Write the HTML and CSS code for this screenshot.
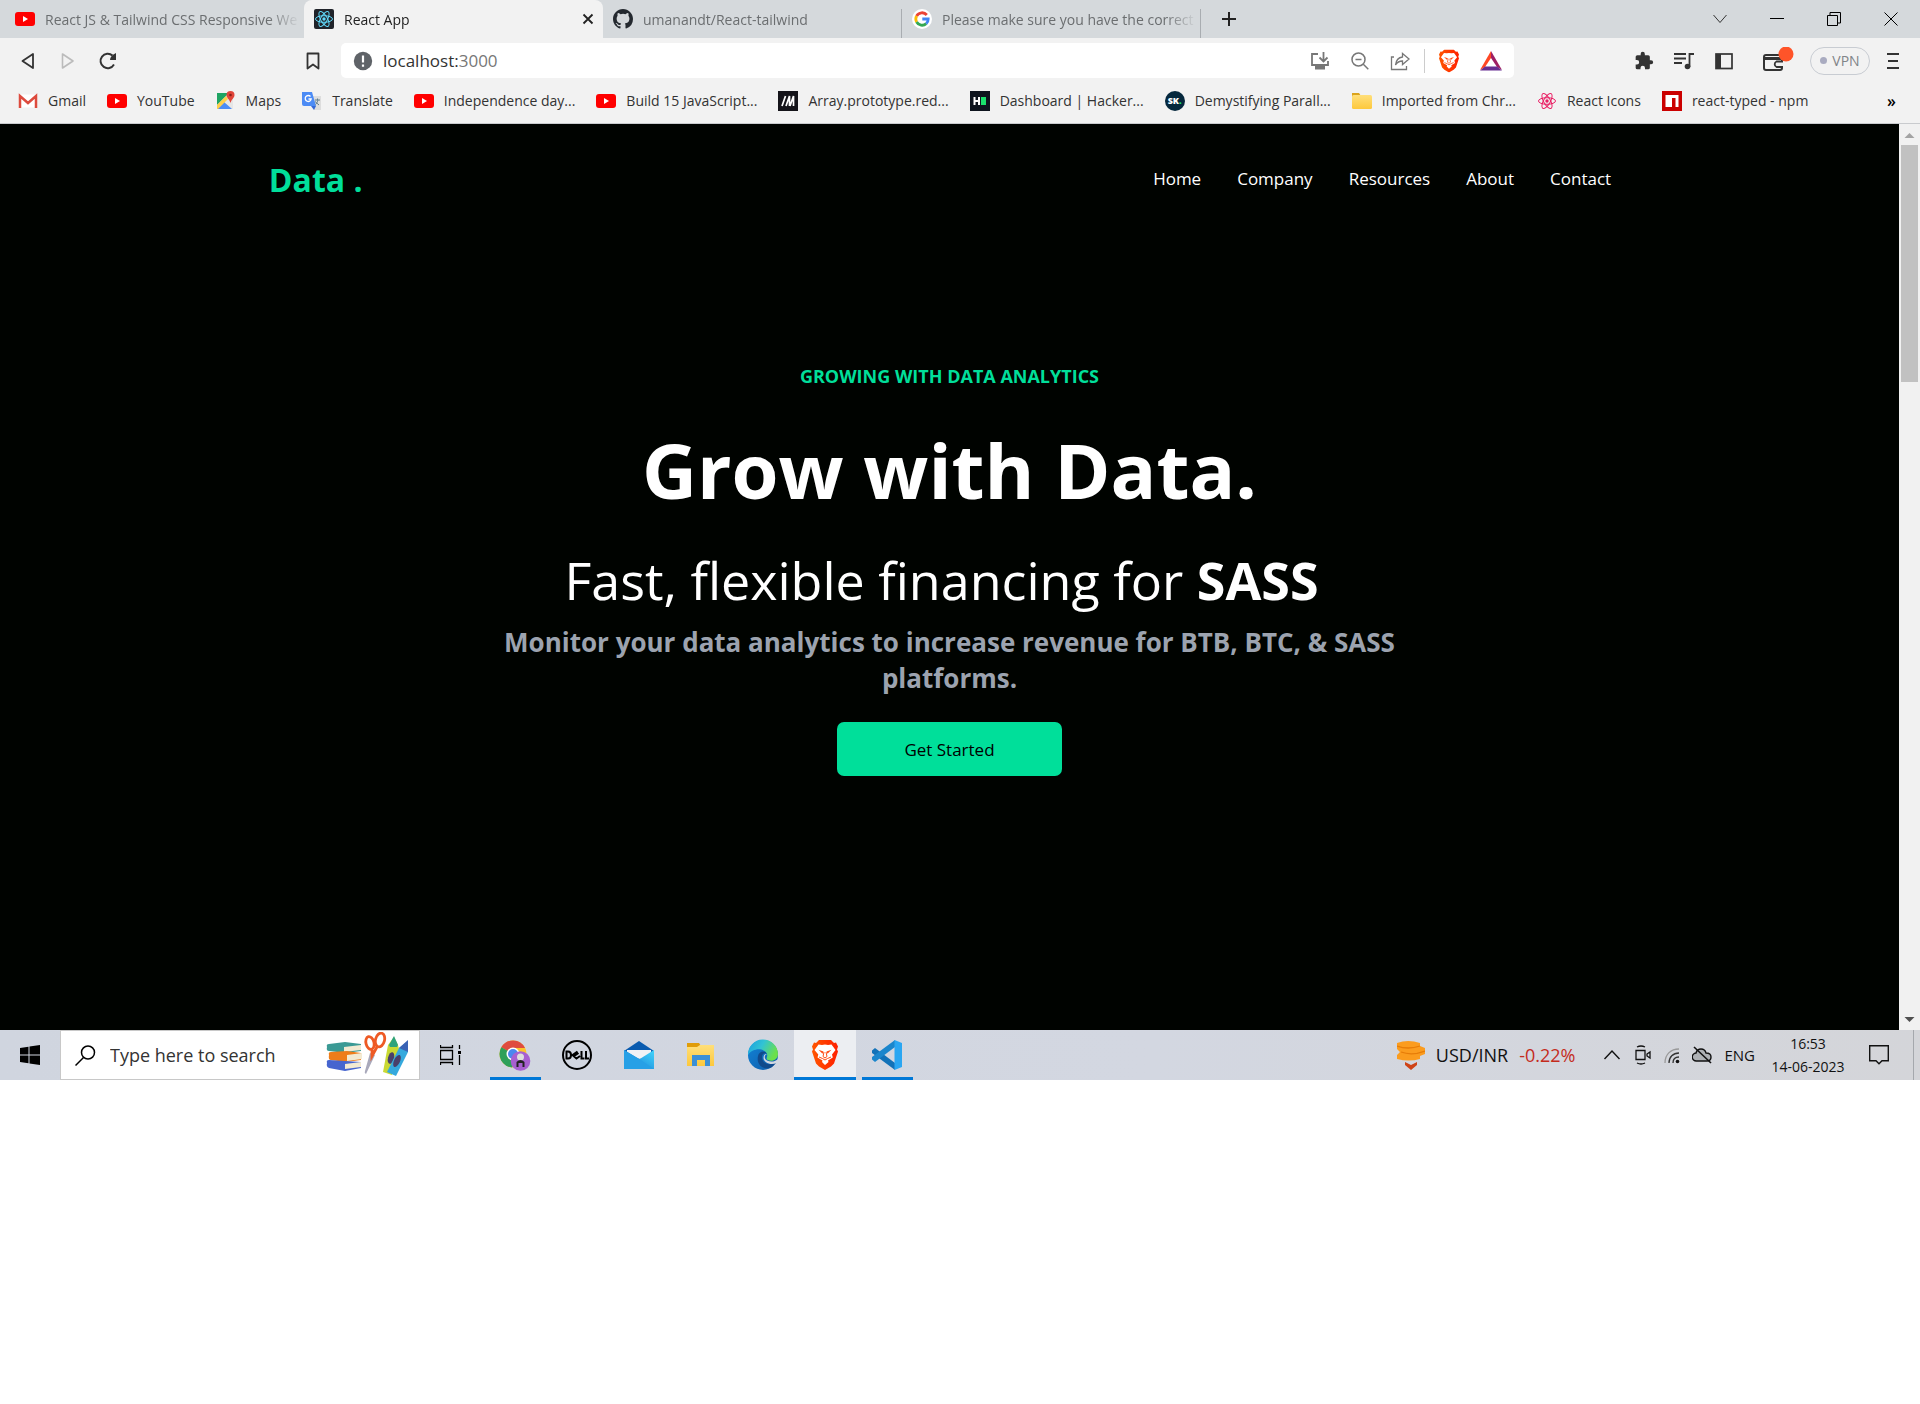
FILE: index.html
```html
<!DOCTYPE html>
<html lang="en">
<head>
<meta charset="utf-8">
<title>React App</title>
<link rel="stylesheet" href="styles.css">
</head>
<body>
<svg class="defs" aria-hidden="true">
  <defs>
    <linearGradient id="gBrave" x1="0" x2="1"><stop offset="0" stop-color="#ff5500"/><stop offset="1" stop-color="#ff2000"/></linearGradient>
    <linearGradient id="gEdge" x1="0" x2="1" y2=".4"><stop offset="0" stop-color="#1a9de0"/><stop offset=".5" stop-color="#32c3d4"/><stop offset="1" stop-color="#6be04b"/></linearGradient>
    <linearGradient id="gEdge2" x1="0" x2="1" y2="1"><stop offset="0" stop-color="#1285d8"/><stop offset="1" stop-color="#0f5aa8"/></linearGradient>
    <linearGradient id="gMail" x1="0" x2="1" y1="1" y2="0"><stop offset="0" stop-color="#1478d4"/><stop offset="1" stop-color="#43d5fb"/></linearGradient>
    <linearGradient id="gFold" x2="0" y2="1"><stop offset="0" stop-color="#ffdf7a"/><stop offset="1" stop-color="#fdc83c"/></linearGradient>
    <symbol id="yt" viewBox="0 0 20 20"><rect y="3" width="20" height="14" rx="3" fill="#f00"/><path d="M8 7l5 3-5 3z" fill="#fff"/></symbol>
    <symbol id="atom" viewBox="0 0 20 20"><g fill="none" stroke="currentColor"><ellipse cx="10" cy="10" rx="8.500" ry="3.300"/><ellipse cx="10" cy="10" rx="8.500" ry="3.300" transform="rotate(60 10 10)"/><ellipse cx="10" cy="10" rx="8.500" ry="3.300" transform="rotate(120 10 10)"/></g><circle cx="10" cy="10" r="1.700" fill="currentColor"/></symbol>
    <symbol id="lion" viewBox="0 0 26 30"><path d="M7 0h12l3 3 2-.5 2 4-1 3 1 2-4 12-3 3-6 3.500-6-3.500-3-3L0 11.500l1-2-1-3 2-4L4 3z" fill="url(#gBrave)"/><path d="M6.500 4.500L10 5l3-.5L16 5l3.500-.5 4 5.500-3.500 4.500.8 3-4.800 3 .5 1.500L13 25l-3-3 .5-1.500-5-3 .8-3L2.500 10z" fill="#fff"/><path d="M6.500 9.800l5 1.700-1 2.300zM19.500 9.800l-5 1.700 1 2.300z" fill="#ff4a12"/><path d="M12 12l-1 4.500 2 1.500 2-1.500-1-4.500M7 17l3.500 1.500L13 20l2.500-1.500L19 17" fill="none" stroke="#ff4a12" stroke-width="1"/></symbol>
  </defs>
</svg>

<section class="browser">
  <div class="tabs">
    <div class="tab"><svg class="i20"><use href="#yt"/></svg><span class="tab-title">React JS &amp; Tailwind CSS Responsive We</span></div>
    <div class="tab active"><svg class="i20 react" viewBox="0 0 20 20"><rect width="20" height="20" rx="2" fill="#20232a"/><use href="#atom"/></svg><span class="tab-title">React App</span><button class="bare" aria-label="Close tab"><svg width="12" height="12" viewBox="0 0 12 12"><path d="M1.500 1.500l9 9m0-9l-9 9" stroke="#222" stroke-width="1.800"/></svg></button></div>
    <div class="tab lined"><svg class="i20" viewBox="0 0 16 16"><path fill="#24292f" d="M8 0C3.580 0 0 3.580 0 8c0 3.540 2.290 6.530 5.470 7.590.4.070.55-.17.55-.38 0-.19-.01-.82-.01-1.490-2.010.37-2.530-.49-2.690-.94-.09-.23-.48-.94-.82-1.130-.28-.15-.68-.52-.01-.53.63-.01 1.080.58 1.230.82.72 1.210 1.870.87 2.330.66.070-.52.280-.87.510-1.070-1.780-.2-3.640-.89-3.640-3.950 0-.87.31-1.590.82-2.150-.08-.2-.36-1.020.08-2.120 0 0 .67-.21 2.200.82a7.600 7.600 0 0 1 4 0c1.530-1.040 2.200-.82 2.200-.82.44 1.100.16 1.920.08 2.120.51.56.82 1.270.82 2.150 0 3.070-1.870 3.750-3.650 3.950.29.25.54.73.54 1.480 0 1.070-.01 1.930-.01 2.200 0 .21.15.46.55.38A8 8 0 0 0 16 8c0-4.420-3.580-8-8-8z"/></svg><span class="tab-title">umanandt/React-tailwind</span></div>
    <div class="tab lined"><svg class="i20" viewBox="0 0 20 20"><circle cx="10" cy="10" r="10" fill="#fff"/><g fill="none" stroke-width="2.800"><path d="M14.800 6A6.200 6.200 0 0 0 4.600 7" stroke="#ea4335"/><path d="M4.600 7a6.200 6.200 0 0 0 0 6" stroke="#fbbc05"/><path d="M4.600 13a6.200 6.200 0 0 0 9.600 1.600" stroke="#34a853"/><path d="M14.200 14.600A6 6 0 0 0 16.200 10H10.300" stroke="#4285f4"/></g></svg><span class="tab-title">Please make sure you have the correct</span></div>
    <button class="bare new-tab" aria-label="New tab"><svg width="16" height="16" viewBox="0 0 16 16"><path d="M8 1v14M1 8h14" stroke="#222" stroke-width="2"/></svg></button>
    <div class="window-controls">
      <button class="bare" aria-label="Search tabs"><svg width="14" height="14" viewBox="0 0 14 14"><path d="M.5 3L7 10.500 13.500 3" fill="none" stroke="#333"/></svg></button>
      <button class="bare" aria-label="Minimize"><svg width="14" height="14" viewBox="0 0 14 14"><path d="M0 6.500h14" stroke="#000"/></svg></button>
      <button class="bare" aria-label="Restore"><svg width="14" height="14" viewBox="0 0 14 14"><path d="M.5 3.500h10v10H.5zM3 3V.5h10.500V11H11" fill="none" stroke="#000"/></svg></button>
      <button class="bare" aria-label="Close"><svg width="14" height="14" viewBox="0 0 14 14"><path d="M.5.5l13 13m0-13l-13 13" stroke="#000"/></svg></button>
    </div>
  </div>

  <div class="toolbar">
    <div class="history">
      <button class="bare" aria-label="Back"><svg class="i20" viewBox="0 0 20 20"><path d="M15 3v14L4.500 10z" fill="none" stroke="#333" stroke-width="1.800" stroke-linejoin="round"/></svg></button>
      <button class="bare" aria-label="Forward"><svg class="i20" viewBox="0 0 20 20"><path d="M4.500 3v14L15 10z" fill="none" stroke="#bbb" stroke-width="1.600" stroke-linejoin="round"/></svg></button>
      <button class="bare" aria-label="Reload"><svg class="i20" viewBox="0 0 20 20"><path d="M16 13.500A7.200 7.200 0 1 1 14.500 4.500" fill="none" stroke="#333" stroke-width="2"/><path d="M18 2v7h-6c0-3 2-5 6-7z" fill="#333"/></svg></button>
    </div>
    <button class="bare" aria-label="Bookmark"><svg class="i20" viewBox="0 0 20 20"><path d="M4.500 2.500h11v15L10 13.500l-5.500 4z" fill="none" stroke="#333" stroke-width="1.800" stroke-linejoin="round"/></svg></button>
    <div class="address">
      <svg class="i20" viewBox="0 0 20 20"><circle cx="10" cy="10" r="9.200" fill="#5f6368"/><path d="M10 4.500v7M10 13.500v2.200" stroke="#fff" stroke-width="2.200"/></svg>
      <span class="url">localhost:<span class="port">3000</span></span>
      <svg class="i20" viewBox="0 0 20 20"><path d="M8 3H2v11h16v-4" fill="none" stroke="#777" stroke-width="1.800"/><path d="M5 15h10v3.500H5z" fill="#777"/><path d="M13.500 1v9M9.500 6.500l4 4 4-4" fill="none" stroke="#777" stroke-width="1.800"/></svg>
      <svg class="i20" viewBox="0 0 20 20"><g fill="none" stroke="#777" stroke-width="1.500"><circle cx="8.500" cy="8.500" r="6.500"/><path d="M5.500 8.500h6M13.300 13.300l5 5"/></g></svg>
      <svg class="i20" viewBox="0 0 20 20"><g fill="none" stroke="#777" stroke-width="1.300"><path d="M4 6H1.500v12.500h15V15"/><path d="M12.500 2.500l6.500 5.500-6.500 5.500V10C9 10 7 11.500 5.500 14 6 9.500 8.500 6.500 12.500 6z"/></g></svg>
      <i class="rule"></i>
      <svg class="shield" viewBox="0 0 26 30"><use href="#lion"/></svg>
      <svg width="24" height="22" viewBox="0 0 24 22"><path d="M12 1L1 20l5-3 6-9z" fill="#ff4724"/><path d="M12 1l11 19-5-3-6-9z" fill="#9e1f63"/><path d="M1 20.500h22L18 16.500H6z" fill="#662d91"/></svg>
    </div>
    <div class="extensions">
      <svg class="i20" viewBox="0 0 24 24"><path fill="#333" d="M20.500 11H19V7a2 2 0 0 0-2-2h-4V3.500a2.500 2.500 0 0 0-5 0V5H4a2 2 0 0 0-2 2v3.800h1.500a2.700 2.700 0 0 1 0 5.400H2V20a2 2 0 0 0 2 2h3.800v-1.500a2.700 2.700 0 0 1 5.400 0V22H17a2 2 0 0 0 2-2v-4h1.500a2.500 2.500 0 0 0 0-5z"/></svg>
      <svg class="i20" viewBox="0 0 20 20"><g fill="none" stroke="#333" stroke-width="1.800"><path d="M0 3h12M0 7.500h12M0 12h8M15.500 16V3H20"/></g><circle cx="13.500" cy="15.500" r="2.800" fill="#333"/></svg>
      <svg class="i20" viewBox="0 0 20 20"><rect x="2" y="3" width="16" height="14.500" fill="none" stroke="#333" stroke-width="1.700"/><path d="M2 3h5v14H2z" fill="#333"/></svg>
      <svg class="wallet" viewBox="0 0 32 28"><rect x="2" y="8" width="18" height="15" rx="2" fill="none" stroke="#333" stroke-width="2"/><path d="M2 10h18v3H2z" fill="#333"/><path d="M21 14.500h-6.500a3 3 0 0 0 0 5.500H21" fill="#f2f2f2" stroke="#333" stroke-width="1.800"/><circle cx="24" cy="7" r="7.500" fill="#ff5429"/></svg>
      <button class="vpn"><i></i>VPN</button>
      <button class="bare menu" aria-label="Menu"><svg width="12" height="18" viewBox="0 0 12 18"><path d="M0 2h12M1 9h10M0 16h12" stroke="#333" stroke-width="1.800"/></svg></button>
    </div>
  </div>

  <nav class="bookmarks" aria-label="Bookmarks">
    <a href="#"><svg class="i20" viewBox="0 0 20 20"><path d="M1 3.500h18v13H1z" fill="#fff"/><path d="M2 17V5l8 7 8-7v12" fill="none" stroke="#dd4b3e" stroke-width="2.500"/></svg>Gmail</a>
    <a href="#"><svg class="i20"><use href="#yt"/></svg>YouTube</a>
    <a href="#"><svg class="i20" viewBox="0 0 20 20"><path d="M1 2h16v16H1z" fill="#e6e6e6"/><path d="M1 2h12L1 14z" fill="#1fa463"/><path d="M1 18l7-7 8 7z" fill="#4c8df6"/><path d="M1 14l9-9 2 3L2 18H1z" fill="#ffd04b"/><path d="M14.500 0a4 4 0 0 0-4 4c0 3 3 4 4 8 1-4 4-5 4-8a4 4 0 0 0-4-4z" fill="#e1453a"/><circle cx="14.500" cy="4" r="1.300" fill="#8a1f18"/></svg>Maps</a>
    <a href="#"><svg class="i20" viewBox="0 0 20 20"><path d="M8 5h11v14H12z" fill="#ddd"/><path d="M0 1h10l4 14H2a2 2 0 0 1-2-2z" fill="#4c8bf5"/><path d="M9 15h5l-2 4z" fill="#3367d6"/><path d="M8.500 5.500a3 3 0 1 0 .7 2.500H6.500" fill="none" stroke="#fff" stroke-width="1.300"/><path d="M13 9h5m-2.500-1.500V9c1 0-1 4-2 4.500m-.5-3l4 3.500" fill="none" stroke="#607d8b"/></svg>Translate</a>
    <a href="#"><svg class="i20"><use href="#yt"/></svg>Independence day...</a>
    <a href="#"><svg class="i20"><use href="#yt"/></svg>Build 15 JavaScript...</a>
    <a href="#"><svg class="i20" viewBox="0 0 20 20"><path d="M0 0h20v20H0z" fill="#15141a"/><path d="M4 15L7.500 5M8 15l3.500-10v10M12 15l3.500-10v10" fill="none" stroke="#fff" stroke-width="1.700"/></svg>Array.prototype.red...</a>
    <a href="#"><svg class="i20" viewBox="0 0 20 20"><path d="M0 0h20v20H0z" fill="#0e141e"/><path d="M4.500 6v8M9 6v8M4.500 10H9" stroke="#fff" stroke-width="2"/><path d="M11 6h5v8h-5z" fill="#1be06c"/></svg>Dashboard | Hacker...</a>
    <a href="#"><span class="sk">SK<b>.</b></span>Demystifying Parall...</a>
    <a href="#"><svg class="i20" viewBox="0 0 20 20"><path d="M0 2h7l2 3h9v10H0z" fill="#dba31c"/><rect y="4" width="20" height="14" rx="1.500" fill="url(#gFold)"/></svg>Imported from Chr...</a>
    <a href="#"><svg class="i20 pink"><use href="#atom"/></svg>React Icons</a>
    <a href="#"><svg class="i20" viewBox="0 0 20 20"><path d="M0 0h20v20H0z" fill="#cb0000"/><path d="M3.500 4h13v12h-3V7H10v9H3.500z" fill="#fff"/></svg>react-typed - npm</a>
    <button class="bare more" aria-label="More bookmarks">»</button>
  </nav>
</section>

<div class="viewport">
  <main class="page">
    <header class="site-header">
      <h1 class="logo">Data .</h1>
      <nav class="site-nav"><a href="#">Home</a><a href="#">Company</a><a href="#">Resources</a><a href="#">About</a><a href="#">Contact</a></nav>
    </header>
    <section class="hero">
      <p class="eyebrow">GROWING WITH DATA ANALYTICS</p>
      <h2 class="headline">Grow with Data.</h2>
      <p class="typed">Fast, flexible financing for <b>SASS</b></p>
      <p class="lead">Monitor your data analytics to increase revenue for BTB, BTC, &amp; SASS platforms.</p>
      <button class="cta">Get Started</button>
    </section>
  </main>
  <div class="scrollbar">
    <svg width="21" height="21" viewBox="0 0 21 21"><path d="M5.500 14l5-5 5 5z" fill="#a3a3a3"/></svg>
    <i class="thumb"></i>
    <svg width="21" height="21" viewBox="0 0 21 21"><path d="M5.500 8l5 5 5-5z" fill="#505050"/></svg>
  </div>
</div>

<footer class="taskbar">
  <button class="bare start" aria-label="Start"><svg class="i20" viewBox="0 0 20 20"><path d="M0 3l8.500-1.200v7.700H0zM9.500 1.600L20 0v9.500H9.500zM0 10.500h8.500v7.800L0 17zM9.500 10.500H20V20L9.500 18.400z"/></svg></button>
  <label class="search">
    <svg width="21" height="21" viewBox="0 0 21 21"><circle cx="13" cy="7.500" r="6.500" fill="none" stroke="#000" stroke-width="1.500"/><path d="M8.500 12.500L.5 20.500" stroke="#000" stroke-width="1.500"/></svg>
    <input type="text" placeholder="Type here to search" aria-label="Search">
    <svg class="art" width="84" height="46" viewBox="0 0 84 46">
      <path d="M1 15q-1-3 2-3l16-2 16 2v7l-16 2-16-2q-3 0-2-4z" fill="#3b9a95"/><path d="M18 15l17-2v5l-17 2z" fill="#f3ead2"/>
      <path d="M3 23q-1-3 2-3l16-1 14 2v7l-16 2-14-2q-3 0-2-5z" fill="#ee7d1a"/><path d="M21 23l15-2v6l-15 2z" fill="#f3ead2"/>
      <path d="M1 31q-1-3 2-3l16 1 16 1v6l-16 3-16-3q-3-1-2-5z" fill="#4665cf"/><path d="M19 32l16-2v5l-16 2z" fill="#f3ead2"/>
      <path d="M44 21l5 2-9 19q-2-1-1-3z" fill="#a9a9bb"/><g fill="none" stroke="#ee5a24" stroke-width="2.800"><ellipse cx="44" cy="11" rx="4" ry="6.500" transform="rotate(-15 44 11)"/><ellipse cx="54" cy="8" rx="4.500" ry="7" transform="rotate(15 54 8)"/><path d="M46 18l0 6 5-9"/></g>
      <path d="M62 13l6-8 4 8 1 4-7 26-9-3z" fill="#c9d934"/><path d="M63 13l5-9 4 9-1 2h-7z" fill="#2ea37c"/><ellipse cx="65" cy="26" rx="3" ry="6" transform="rotate(15 65 26)" fill="#49406a"/>
      <path d="M73 16l9-7v11L70 44l-9-4z" fill="#35a9dd"/><path d="M73 16l9-8v12z" fill="#3a63b5"/><ellipse cx="71" cy="29" rx="3" ry="6.500" transform="rotate(25 71 29)" fill="#49406a"/>
    </svg>
  </label>
  <button class="bare task-view" aria-label="Task view"><svg width="22" height="20" viewBox="0 0 22 20"><path d="M.5 5.500h12v9H.5zM.5 0v2.500h12V0M.5 20v-2.500h12V20M19.500 0v4M19.500 10v10" fill="none" stroke="#000" stroke-width="1.300"/><path d="M18 6h3v3h-3z"/></svg></button>
  <div class="apps">
    <button class="app open" aria-label="Chrome"><svg viewBox="0 0 32 32"><circle cx="14" cy="15" r="13.500" fill="#fbc52c"/><path d="M14 15L2.300 8.300A13.500 13.500 0 0 1 26 9H14z" fill="#df4b3f"/><path d="M2.300 8.300A13.500 13.500 0 0 0 13 28.500l6-11z" fill="#2da05a"/><circle cx="14" cy="15" r="6.500" fill="#fff"/><circle cx="14" cy="15" r="5" fill="#4a87ee"/><circle cx="21.500" cy="22" r="9.800" fill="#a760d0"/><circle cx="21.500" cy="18" r="3.500" fill="#ddd"/><path d="M17.500 28v-5q4-4 8 0v5h-2v-4h-4v4z" fill="#222"/></svg></button>
    <button class="app" aria-label="Dell"><svg viewBox="0 0 32 32"><circle cx="16" cy="16" r="14" fill="none" stroke="#000" stroke-width="2"/><g fill="none" stroke="#000" stroke-width="2"><path d="M5.500 12.500v7h1.500q3 0 3-3.500t-3-3.500zM16.500 12.500l-5 3.500 4 3.500 3.500-2.500M12.500 17.500l5-3.500M20.500 12v7.500h3M25 12v7.500h3"/></g></svg></button>
    <button class="app" aria-label="Mail"><svg viewBox="0 0 32 32"><path d="M1 12L16 2l15 10v5H1z" fill="#0a5baf"/><path d="M4 11h24v8H4z" fill="#f2f2f5"/><path d="M1 11l30 18v1H1z" fill="#1d8fe1"/><path d="M31 11L1 30h30z" fill="url(#gMail)"/><path d="M1 11v19h30L18 21z" fill="#27a0e6"/></svg></button>
    <button class="app" aria-label="File Explorer"><svg viewBox="0 0 32 32"><path d="M2 4h12l2 3-2 4H2z" fill="#e09c08"/><path d="M2 8h10l3-2h14v21H2z" fill="url(#gFold)"/><path d="M7 27V16h18v11h-5v-6h-8v6z" fill="#3b8fd6"/></svg></button>
    <button class="app" aria-label="Edge"><svg viewBox="0 0 32 32"><circle cx="16" cy="16" r="15" fill="url(#gEdge2)"/><path d="M1 16a15 15 0 0 1 30-1c0 6-6 8-10 6-3-1 0-3-1-6-3-7-15-6-19 1z" fill="url(#gEdge)"/><path d="M11 17c-2 9 6 15 14 11l4-4c-6 3-14 1-14-6 0-3 3-5 5-3-2-4-8-3-9 2z" fill="#114a8b"/><path d="M20 15c-3 1-3 5 0 6.500 4 2 8 1 10.500-1l1 2-2 1.500c-6 3-13-1-13-5 0-3 1.500-4.500 3.500-4z" fill="#d3d7e0"/></svg></button>
    <button class="app open current" aria-label="Brave"><svg viewBox="-3 -1 32 32"><use href="#lion" width="26" height="30"/></svg></button>
    <button class="app open" aria-label="Visual Studio Code"><svg viewBox="0 0 32 32"><path d="M1 11.500L4 9l20 15v7L1 14z" fill="#1272b8"/><path d="M1 20.500L4 23 24 8V1L1 18z" fill="#1b86cc"/><path d="M23.500 1L31 4v24l-7.500 3z" fill="#2aa6f2"/></svg></button>
  </div>
  <div class="ticker">
    <svg width="28" height="30" viewBox="0 0 28 30"><path d="M0 3q11-4 23 0v3l5 2v6l-5 2v3q-11 3-23 0v-4l3-3-3-3z" fill="#fb9c1e"/><path d="M0 6q11 4 23 0M4 12q11 4 24-1" fill="none" stroke="#e67c08" stroke-width="1.300"/><path d="M8 22l6 3 6-3v3l-6 5-6-5z" fill="#cf4316"/></svg>
    <span>USD/INR</span><span class="down">-0.22%</span>
  </div>
  <div class="tray">
    <svg class="i20" viewBox="0 0 20 20"><path d="M2.500 14l7.500-8 7.500 8" fill="none" stroke="#111" stroke-width="1.400"/></svg>
    <svg class="i20" viewBox="0 0 20 20"><path d="M4 5.500h9v9H4zM15 9l3-2v6l-3-2zM5 2q4-2 8 0M5 18q4 2 8 0" fill="none" stroke="#111" stroke-width="1.300"/></svg>
    <svg class="i20" viewBox="0 0 20 20"><g fill="none" stroke="#333" stroke-width="1.300"><path d="M3 18C3 9 9 4 17 4" stroke="#999"/><path d="M7 18c0-6 4-10 10-10M11 18c0-4 2-6 6-6"/></g><circle cx="15.500" cy="16.500" r="1.800" fill="#111"/></svg>
    <svg class="i20" viewBox="0 0 20 20"><path d="M4.500 16a4 4 0 0 1-.5-8q1-4 5-4t5 4q5 0 5 4t-4 4z" fill="#aeb1b5" stroke="#111" stroke-width="1.400"/><path d="M2 2l17 16" stroke="#111" stroke-width="1.600"/></svg>
  </div>
  <span class="lang">ENG</span>
  <div class="clock"><span>16:53</span><span>14-06-2023</span></div>
  <button class="bare notices" aria-label="Notifications"><svg width="20" height="20" viewBox="0 0 20 20"><path d="M.7.7h18.600v15H13l-3 3-3-3H.7z" fill="none" stroke="#111" stroke-width="1.400"/></svg></button>
</footer>
</body>
</html>
```
FILE: styles.css
```css
* { box-sizing: border-box; }
body { margin: 0; background: #fff; color: #333; font-family: "Open Sans", "Noto Sans", sans-serif; font-size: 14px; }
h1, h2, p { margin: 0; }
svg { display: block; flex: none; }
a { color: inherit; text-decoration: none; }
button { font: inherit; }
.defs { position: absolute; width: 0; height: 0; }
.i20 { width: 20px; height: 20px; }
.bare { display: flex; align-items: center; justify-content: center; flex: none; padding: 0; border: 0; background: none; }

/* Browser chrome */
.browser { background: #f2f2f2; border-bottom: 1px solid #c9cbce; }
.tabs { display: flex; height: 38px; padding-left: 5px; background: #d5d9dc; }
.tab { display: flex; align-items: center; gap: 10px; flex: 0 1 299px; min-width: 0; padding: 0 2px 0 10px; color: #6b6e70; }
.tab-title { flex: 1; min-width: 0; overflow: hidden; white-space: nowrap; mask-image: linear-gradient(to right, #000 calc(100% - 34px), transparent calc(100% - 2px)); }
.tab.active { padding-right: 9px; border-radius: 8px 8px 0 0; background: #f2f2f2; color: #222; }
.tab.lined { background: linear-gradient(#a9adb1, #a9adb1) right 9px / 1px 29px no-repeat; }
.react { color: #61dafb; }
.new-tab { width: 56px; }
.window-controls { display: flex; margin: 0 1px 0 auto; }
.window-controls button { width: 57px; }
.toolbar { display: flex; align-items: center; height: 45px; padding: 0 21px 0 18px; }
.history { display: flex; gap: 20px; width: 285px; }
.address { display: flex; align-items: center; flex: 1; gap: 20px; height: 35px; margin-left: 18px; padding: 0 11px 0 12px; border-radius: 5px; background: #fff; }
.url { flex: 1; margin-left: -10px; font-size: 17px; color: #333; }
.port { color: #777; }
.rule { width: 1px; height: 24px; margin: 0 -6px; background: #ccc; }
.shield { width: 20px; height: 24px; }
.extensions { display: flex; align-items: center; gap: 20px; width: 385px; justify-content: flex-end; }
.wallet { width: 32px; height: 28px; margin: 0 -4px 0 8px; }
.vpn { display: flex; align-items: center; justify-content: center; gap: 5px; width: 60px; height: 28px; padding: 0; border: 1px solid #c8ccd2; border-radius: 14px; background: none; color: #808488; }
.vpn i { width: 7px; height: 7px; border-radius: 50%; background: #a9abc0; }
.menu { margin-left: -3px; }
.bookmarks { display: flex; align-items: center; gap: 21px; height: 40px; padding: 0 24px 5px 18px; }
.bookmarks a { display: flex; align-items: center; gap: 10px; white-space: nowrap; }
.sk { width: 20px; height: 20px; border-radius: 50%; background: #06283d; color: #fff; font-size: 9px; font-weight: 800; line-height: 20px; text-align: center; }
.sk b { color: #1be06c; }
.pink { color: #e91e63; }
.more { margin-left: auto; font-size: 16px; font-weight: 600; }

/* Web page */
.viewport { display: flex; min-height: 906px; background: #000300; }
.page { flex: 1; }
.site-header { display: flex; align-items: center; justify-content: space-between; width: 72%; height: 112px; margin: 0 auto; padding: 0 22px 2px 3px; color: #fff; }
.logo { color: #00df9a; font-size: 32px; font-weight: 700; }
.site-nav { display: flex; gap: 36px; padding-bottom: 2px; font-size: 17px; }
.hero { display: flex; flex-direction: column; align-items: center; max-width: 1000px; margin: 0 auto; padding-top: 128px; color: #fff; text-align: center; }
.eyebrow { color: #00df9a; font-size: 18px; font-weight: 700; line-height: 24px; }
.headline { padding: 38px 0 34px; font-size: 76px; font-weight: 700; line-height: 88px; }
.typed { padding-right: 16px; font-size: 52px; line-height: 64px; }
.lead { max-width: 900px; margin-top: 12px; color: #9ca3af; font-size: 26px; font-weight: 700; line-height: 36px; }
.cta { width: 225px; height: 54px; margin-top: 26px; border: 0; border-radius: 7px; background: #00df9a; color: #000; font-size: 17px; font-weight: 500; }
.scrollbar { display: flex; flex-direction: column; width: 21px; background: #f1f1f1; }
.thumb { width: 17px; height: 237px; margin: 0 2px auto; background: #c1c1c1; }

/* Taskbar */
.taskbar { display: flex; align-items: center; height: 50px; background: linear-gradient(90deg, #d0d5df, #d3d7e1 60%, #d4d5d9); color: #111; }
.start { width: 60px; height: 50px; }
.search { display: flex; align-items: center; width: 360px; height: 50px; padding: 0 9px 0 14px; border: 1px solid #c8c8c8; background: #fff; }
.search input { flex: 1; min-width: 0; margin-left: 14px; padding: 0; border: 0; outline: 0; background: none; font: inherit; font-size: 18px; }
.search input::placeholder { color: #333; }
.task-view { width: 62px; }
.apps { display: flex; margin-left: 2px; }
.app { display: flex; align-items: center; justify-content: center; width: 62px; height: 50px; padding: 0; border: 0; background: none; }
.app svg { width: 32px; height: 32px; }
.app.open { background: linear-gradient(#0078d7, #0078d7) bottom / 51px 3px no-repeat; }
.app.current { background: linear-gradient(#0078d7, #0078d7) bottom / 100% 3px no-repeat #eceef2; }
.ticker { display: flex; align-items: center; gap: 11px; margin-left: auto; font-size: 18px; }
.down { color: #c42b1c; }
.tray { display: flex; gap: 10px; margin-left: 27px; }
.lang { margin-left: 12px; font-size: 15px; }
.clock { display: flex; flex-direction: column; width: 106px; font-size: 14px; line-height: 23px; text-align: center; }
.notices { width: 20px; margin: 0 24px 0 8px; }
.taskbar::after { content: ""; align-self: stretch; width: 6px; border-left: 1px solid #a5a8ad; }
```
